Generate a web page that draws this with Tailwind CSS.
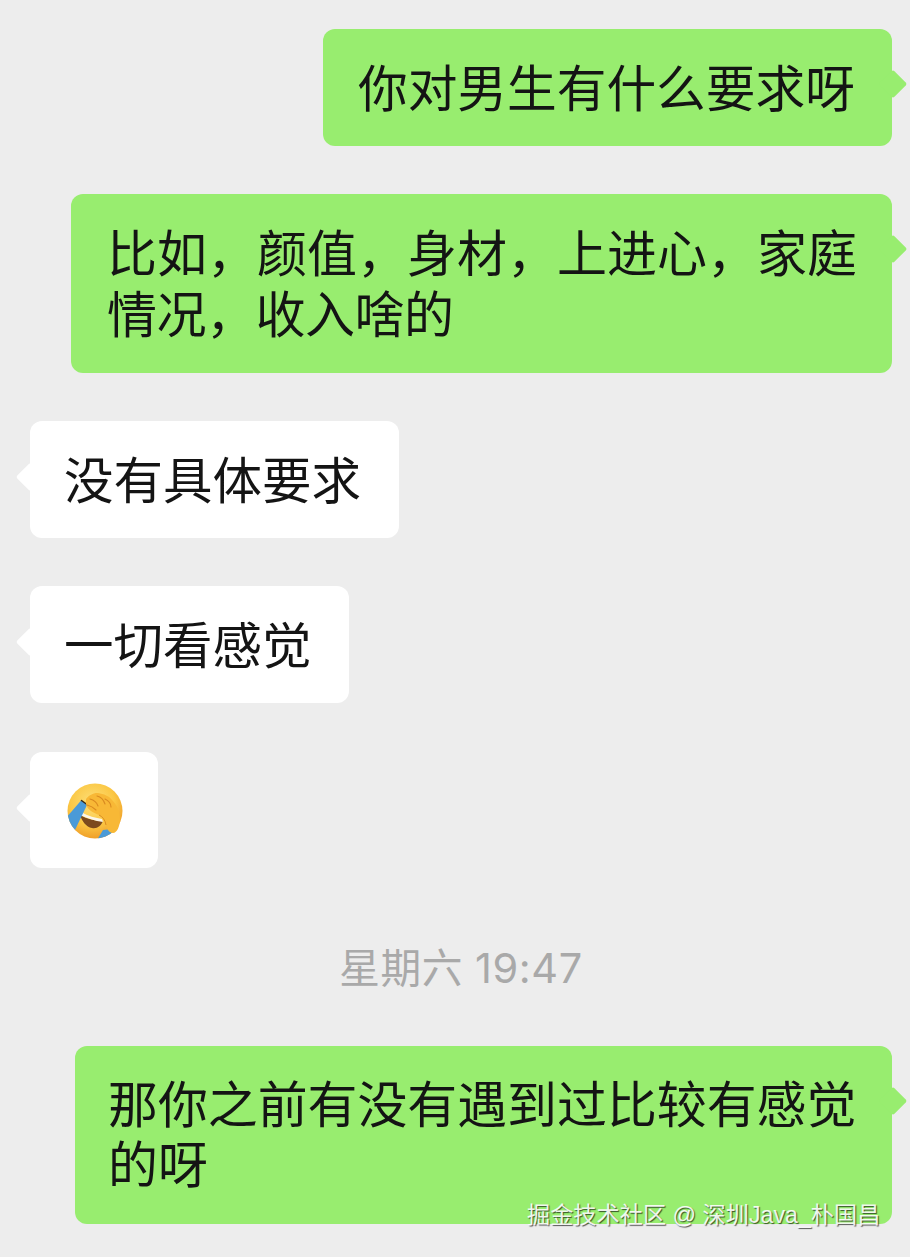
<!DOCTYPE html>
<html lang="zh">
<head>
  <meta charset="UTF-8" />
  <title>Chat</title>
  <script src="https://cdn.jsdelivr.net/npm/@tailwindcss/browser@4"></script>
</head>
<body class="bg-[#ededed]">
  <div class="relative w-[910px] h-[1257px] overflow-hidden bg-[#ededed] pt-[29px] font-['Liberation_Sans','Noto_Sans_CJK_SC',sans-serif] text-[#141414]">

    <div class="flex flex-col items-end pr-[18px] gap-[48px]">
      <div class="relative w-[569px] h-[117px] rounded-[12px] bg-[#98ed6f] pl-[35px] pt-[30px] text-[49.7px] leading-[62px] whitespace-nowrap">
        你对男生有什么要求呀
        <span class="absolute right-[-11px] top-[45px] w-[20px] h-[20px] rotate-45 rounded-[2px] bg-[#98ed6f]"></span>
      </div>
      <div class="relative w-[821px] h-[179px] rounded-[12px] bg-[#98ed6f] pl-[36px] pt-[31px] text-[50px] leading-[61px] whitespace-nowrap">
        比如，颜值，身材，上进心，家庭<br /><span class="tracking-[-0.5px]">情况，收入啥的</span>
        <span class="absolute right-[-11px] top-[45px] w-[20px] h-[20px] rotate-45 rounded-[2px] bg-[#98ed6f]"></span>
      </div>
    </div>

    <div class="flex flex-col items-start pl-[30px] mt-[48px]">
      <div class="relative w-[369px] h-[117px] rounded-[12px] bg-white pl-[34px] pt-[30px] text-[49.5px] leading-[62px] whitespace-nowrap">
        没有具体要求
        <span class="absolute left-[-10px] top-[46px] w-[20px] h-[20px] rotate-45 rounded-[2px] bg-white"></span>
      </div>
      <div class="relative mt-[48px] w-[319px] h-[117px] rounded-[12px] bg-white pl-[34px] pt-[30px] text-[49.5px] leading-[62px] whitespace-nowrap">
        一切看感觉
        <span class="absolute left-[-10px] top-[46px] w-[20px] h-[20px] rotate-45 rounded-[2px] bg-white"></span>
      </div>
      <div class="relative mt-[49px] w-[128px] h-[116px] rounded-[12px] bg-white pl-[36px] pt-[30px]">
        <span class="absolute left-[-10px] top-[46px] w-[20px] h-[20px] rotate-45 rounded-[2px] bg-white"></span>
        <svg width="58" height="58" viewBox="0 0 58 58" class="relative block">
          <defs>
            <radialGradient id="face" cx="45%" cy="35%" r="68%">
              <stop offset="0%" stop-color="#fde07a" />
              <stop offset="60%" stop-color="#fbc744" />
              <stop offset="100%" stop-color="#ee9a26" />
            </radialGradient>
            <clipPath id="round"><circle cx="29" cy="29" r="27.5" /></clipPath>
          </defs>
          <circle cx="29" cy="29" r="27.5" fill="url(#face)" />
          <g clip-path="url(#round)">
            <path d="M14 33 C21 37 29 39 37 39 C35 44 31 47 26 46 C20 45 16 39 14 33 Z" fill="#7c4a1e" />
            <path d="M15 30 C22 34 30 36 36 37 L37 40 C29 39 21 36 14 33 Z" fill="#fbf6ea" />
            <path d="M15.5 18 L0 36 L8 50 L21 23 Z" fill="#4a9ad8" />
            <path d="M37 48 L47 47 L45 58 L31 58 Z" fill="#4a9ad8" />
          </g>
          <path d="M15.5 18.5 L21 22.5" stroke="#3b2a14" stroke-width="1.5" stroke-linecap="round" />
          <path d="M20 17 C23 13 28 10.5 32 11 C38 12 43 14 46 18 C51 23 54 30 54 37 C54 44 51 51 47 51 C43 51 41 47 40 43 C39 38 37 35 33 33 C28 31 21 28 20 22 Z" fill="#f8b836" />
          <path d="M24 17 C28 18 31 21 32 24 M31 14 C35 15 38 19 39 22 M39 17 C43 19 45 22 45 25 M21 23 C25 24 28 26 30 28" fill="none" stroke="#d98a20" stroke-width="1.1" stroke-linecap="round" />
          <path d="M40 43 C39 38 37 35 33 33" fill="none" stroke="#d98a20" stroke-width="1" />
        </svg>
      </div>
    </div>

    <div class="mt-[70px] h-[60px] pl-[12px] text-center text-[40.7px] leading-[60px] tracking-[0.6px] text-[#a9a9a9]">星期六 <span class="font-['Inter'] text-[41.5px]">19:47</span></div>

    <div class="flex justify-end pr-[18px] mt-[48px]">
      <div class="relative w-[817px] h-[178px] rounded-[12px] bg-[#98ed6f] pl-[33px] pt-[30px] text-[49.9px] leading-[60px] whitespace-nowrap">
        那你之前有没有遇到过比较有感觉<br />的呀
        <span class="absolute right-[-11px] top-[45px] w-[20px] h-[20px] rotate-45 rounded-[2px] bg-[#98ed6f]"></span>
      </div>
    </div>

    <div class="absolute left-[527px] top-[1200px] text-[23.2px] leading-[30px] whitespace-nowrap text-white/90 [text-shadow:1px_1px_1px_rgba(0,0,0,0.65)]">掘金技术社区 @ 深圳Java_朴国昌</div>
  </div>
</body>
</html>
